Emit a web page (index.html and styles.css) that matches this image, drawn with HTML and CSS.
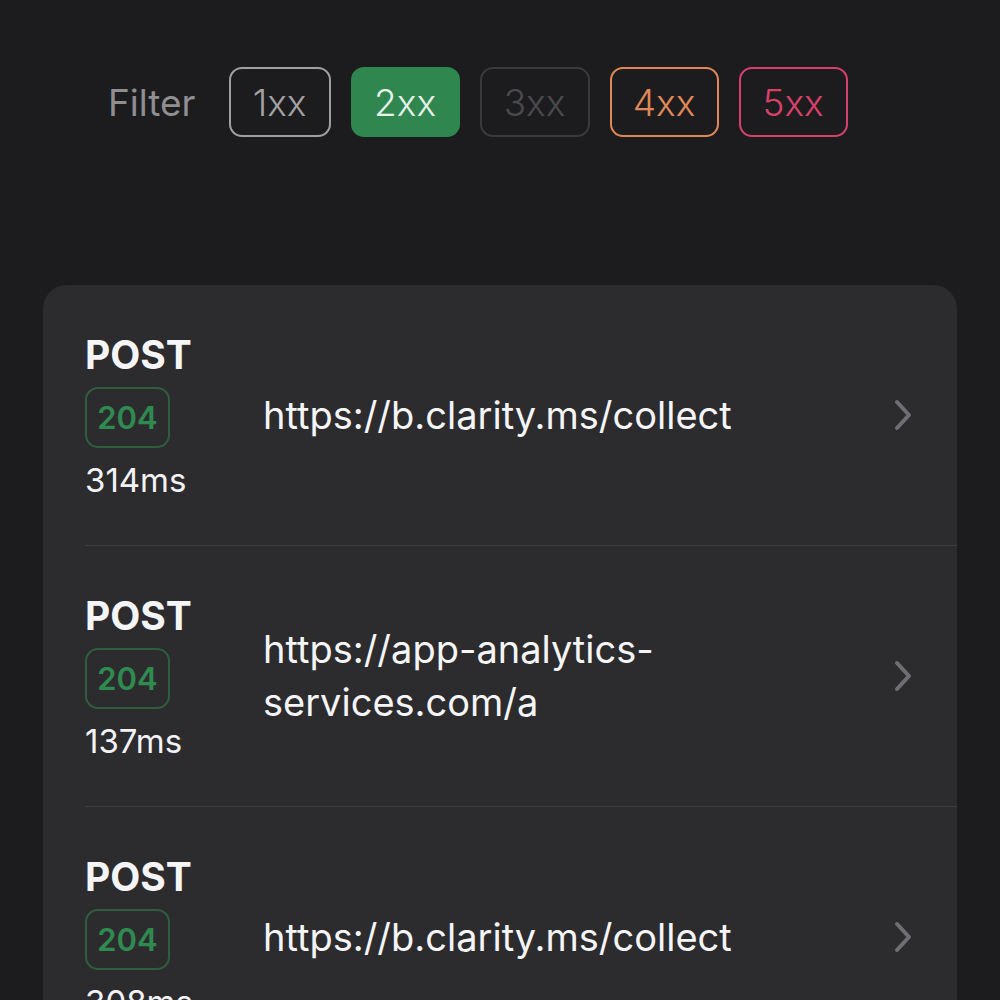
FILE: index.html
```html
<!DOCTYPE html>
<html lang="en">
<head>
<meta charset="utf-8">
<title>Requests</title>
<link rel="stylesheet" href="styles.css">
</head>
<body>
<div class="screen">
  <div class="filter-bar">
    <span class="filter-label">Filter</span>
    <button class="chip chip-1xx">1xx</button>
    <button class="chip chip-2xx">2xx</button>
    <button class="chip chip-3xx">3xx</button>
    <button class="chip chip-4xx">4xx</button>
    <button class="chip chip-5xx">5xx</button>
  </div>

  <div class="card">
    <div class="row">
      <div class="meta">
        <div class="method">POST</div>
        <div class="status">204</div>
        <div class="duration">314ms</div>
      </div>
      <div class="url">https://b.clarity.ms/collect</div>
      <svg class="chevron" viewBox="0 0 20 32" width="20" height="32"><path d="M4 3 L16 16 L4 29" fill="none" stroke="#6e6e73" stroke-width="4" stroke-linecap="round" stroke-linejoin="round"/></svg>
    </div>
    <div class="row">
      <div class="meta">
        <div class="method">POST</div>
        <div class="status">204</div>
        <div class="duration">137ms</div>
      </div>
      <div class="url">https://app-analytics-services.com/a</div>
      <svg class="chevron" viewBox="0 0 20 32" width="20" height="32"><path d="M4 3 L16 16 L4 29" fill="none" stroke="#6e6e73" stroke-width="4" stroke-linecap="round" stroke-linejoin="round"/></svg>
    </div>
    <div class="row">
      <div class="meta">
        <div class="method">POST</div>
        <div class="status">204</div>
        <div class="duration">308ms</div>
      </div>
      <div class="url">https://b.clarity.ms/collect</div>
      <svg class="chevron" viewBox="0 0 20 32" width="20" height="32"><path d="M4 3 L16 16 L4 29" fill="none" stroke="#6e6e73" stroke-width="4" stroke-linecap="round" stroke-linejoin="round"/></svg>
    </div>
  </div>
</div>
</body>
</html>
```
FILE: styles.css
```css
html, body {
  margin: 0;
  padding: 0;
  background: #1c1c1e;
  height: 100%;
  overflow: hidden;
}
body {
  font-family: Inter, "Noto Sans", "Liberation Sans", sans-serif;
  color: #f2f2f7;
}
.screen {
  padding-top: 67px;
}
.filter-bar {
  display: flex;
  align-items: center;
  gap: 20px;
  padding-left: 108px;
  height: 70px;
}
.filter-label {
  font-size: 37px;
  color: #8e8e93;
  margin-right: 13px;
  font-weight: 400;
}
.chip {
  box-sizing: border-box;
  width: 109px;
  height: 70px;
  border-radius: 13px;
  border: 2px solid #a0a0a2;
  background: transparent;
  font-family: inherit;
  font-size: 37px;
  font-weight: 300;
  padding: 0;
  color: #a2a2a4;
}
.chip-1xx { width: 102px; }
.chip-2xx { background: #2f874f; border-color: #2f874f; color: #e6f2e9; }
.chip-3xx { border-color: #3a3a3c; color: #4a4a4d; width: 110px; }
.chip-4xx { border-color: #e08858; color: #e08858; }
.chip-5xx { border-color: #d8406c; color: #d8406c; }

.card {
  margin: 148px 43px 0 43px;
  background: #2c2c2e;
  border-radius: 24px;
}
.row {
  display: flex;
  align-items: center;
  height: 261px;
  box-sizing: border-box;
  margin-left: 42px;
  padding-right: 44px;
  border-bottom: 1px solid #3d3d40;
}
.meta {
  width: 178px;
  flex: none;
  display: flex;
  flex-direction: column;
  align-items: flex-start;
  padding-top: 4px;
}
.method {
  font-size: 39px;
  font-weight: 700;
  line-height: 40px;
  color: #f5f5f7;
}
.status {
  box-sizing: border-box;
  margin-top: 12px;
  width: 85px;
  height: 61px;
  border: 2px solid #2e5e3f;
  border-radius: 13px;
  display: flex;
  align-items: center;
  justify-content: center;
  font-size: 31px;
  font-weight: 600;
  color: #2f8a50;
}
.duration {
  margin-top: 12px;
  font-size: 33px;
  line-height: 40px;
  color: #f2f2f7;
}
.url {
  flex: 1;
  font-size: 38px;
  line-height: 53px;
  color: #f5f5f7;
  padding-right: 40px;
}
.chevron {
  flex: none;
}
```
